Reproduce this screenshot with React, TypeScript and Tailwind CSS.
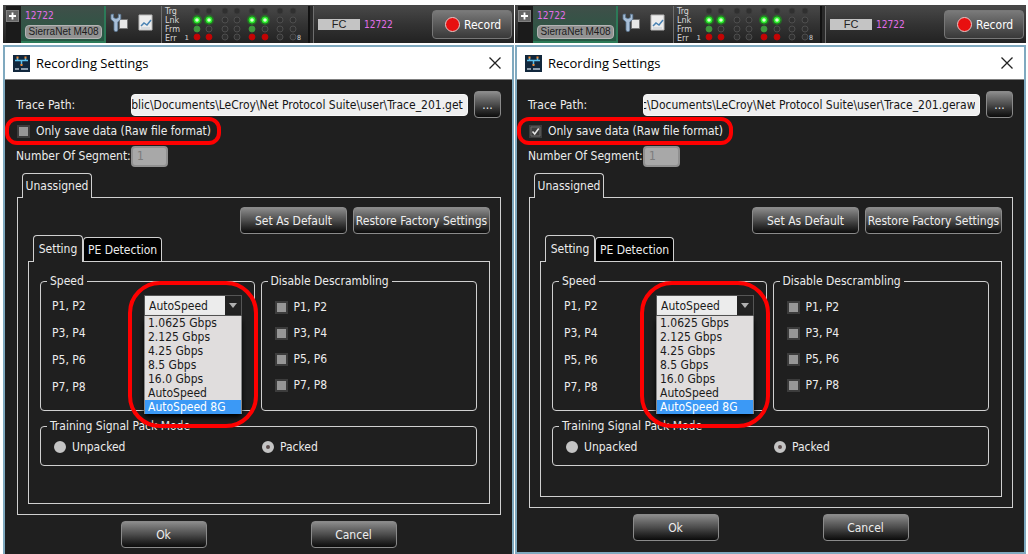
import React, { useEffect, useRef } from "react";

const speeds = [
  "1.0625 Gbps",
  "2.125 Gbps",
  "4.25 Gbps",
  "8.5 Gbps",
  "16.0 Gbps",
  "AutoSpeed",
  "AutoSpeed 8G",
];

const ports = ["P1, P2", "P3, P4", "P5, P6", "P7, P8"];

const ledColumns = [8, 20, 36, 48, 63, 76, 91, 104];
const ledRows = [
  { y: 5, colors: ["", "", "", "", "", "", "", ""] },
  { y: 14, colors: ["#2bf02b", "#2bf02b", "", "", "#2bf02b", "#2bf02b", "", ""] },
  { y: 23, colors: ["#3f9a3f", "", "", "", "#3f9a3f", "", "", ""] },
  { y: 31, colors: ["#c40404", "#c40404", "", "", "#c40404", "#c40404", "", ""] },
];

const buttonClass =
  "h-[27px] rounded border border-[#8a8a8a] bg-linear-to-b from-[#8c8c8c] via-[#4c4c4c] to-[#0c0c0c] text-[#eeeeee] whitespace-nowrap";

function Leds() {
  return (
    <svg width="112" height="38" viewBox="0 0 112 38" className="shrink-0">
      {ledRows.map((row) =>
        row.colors.map((color, i) => (
          <g key={`${row.y}-${i}`}>
            {color === "#2bf02b" && (
              <circle cx={ledColumns[i]} cy={row.y} r="5" fill="#16a016" opacity="0.55" />
            )}
            <circle
              cx={ledColumns[i]}
              cy={row.y}
              r="3"
              fill={color || "#303030"}
              stroke={color || (row.y === 5 ? "#3c3c3c" : "#565656")}
              strokeWidth="0.8"
            />
            {color === "#2bf02b" && <circle cx={ledColumns[i]} cy={row.y} r="1.8" fill="#d8ffd0" />}
          </g>
        ))
      )}
    </svg>
  );
}

function Toolbar() {
  return (
    <div className="flex h-[38px] bg-linear-to-b from-[#484848] via-[#333333] to-[#222222] border-t border-[#444444] pl-[3px] text-[10px] leading-3">
      <div className="w-[15px] shrink-0 bg-[#1b1b1b] pt-1">
        <button aria-label="Expand" className="block w-[13px] h-3 bg-[#666666] border border-[#808080]">
          <svg width="11" height="10" viewBox="0 0 11 10">
            <path d="M5.5 1.5v7M2 5h7" stroke="#ffffff" strokeWidth="1.8" />
          </svg>
        </button>
      </div>
      <div className="w-[85px] shrink-0 border-r-2 border-b-2 border-[#2c7a58] bg-linear-to-b from-[#3f4f49] to-[#245843] pl-1 pt-1">
        <div className="text-[#e26ee8]">12722</div>
        <div className="mt-[3px] w-[77px] h-[14px] rounded-sm border border-[#b4b4b4] bg-[#929292] text-center text-[#1c1c1c] font-['Liberation_Sans',sans-serif] leading-[12px] whitespace-nowrap">
          SierraNet M408
        </div>
      </div>
      <svg width="20" height="24" viewBox="0 0 20 24" className="shrink-0 ml-1 mt-1">
        <path d="M9.5 9.5h8v9h-8z" fill="#e8e8e8" stroke="#777777" />
        <path
          d="M1 4.5v4.8l3 2.6v7.8a1.9 1.9 0 0 0 3.8 0v-7.8l3-2.6V4.5L8.4 4v3.6L6 8.8 3.4 7.6V4z"
          fill="#a9bfd8"
          stroke="#5c7896"
          strokeWidth="0.8"
        />
      </svg>
      <svg width="16" height="18" viewBox="0 0 16 18" className="shrink-0 ml-2 mt-2">
        <path d="M1 1h13v15H1z" fill="#ececec" stroke="#b8b8b8" />
        <path d="M3 12l3-3 3 2 4-5" fill="none" stroke="#4a83b4" strokeWidth="1.5" />
        <path d="M3 14h9" stroke="#c0c8d0" />
      </svg>
      <div className="shrink-0 ml-[7px] w-px bg-[#6e6e6e]" />
      <div className="shrink-0 w-[27px] pl-[3px] pt-px text-[8px] leading-[9px] text-[#d8d8d8] font-['DejaVu_Sans',sans-serif]">
        <div>Trg</div>
        <div>Lnk</div>
        <div>Frm</div>
        <div className="flex justify-between">
          Err<span className="text-[7px]">1</span>
        </div>
      </div>
      <Leds />
      <div className="shrink-0 w-[7px] pt-[28px] -ml-1 text-[7px] leading-[9px] text-[#d8d8d8]">8</div>
      <div className="shrink-0 ml-1 w-[6px] border-l-2 border-r border-l-[#111111] border-r-[#6e6e6e] bg-[#2a2a2a]" />
      <div className="flex flex-1 items-center ml-1">
        <div className="w-[42px] h-[11px] bg-[#c4c4c4] text-center text-[#222222] font-['Liberation_Sans',sans-serif] text-[11px] leading-[11px]">
          FC
        </div>
        <div className="ml-1 text-[#e26ee8]">12722</div>
      </div>
      <button className="shrink-0 mt-1 mr-0.5 flex h-[29px] w-20 items-center gap-1 rounded border border-[#777777] bg-linear-to-b from-[#7a7a7a] to-[#393939] pl-3 text-[12px] text-white">
        <span className="size-[15px] rounded-full border border-[#e8c8c8] bg-[#e81010]" />
        Record
      </button>
    </div>
  );
}

function TitleBar() {
  return (
    <div className="flex h-[33px] items-center border-b border-[#808080] bg-white pl-2 pr-[10px]">
      <svg width="17" height="17" viewBox="0 0 17 17">
        <path d="M0 0h17v17H0z" fill="#11273c" />
        <path d="M2 5.5h13M4.5 5v-2M12.5 5v-2M8.5 5v5" stroke="#5cc0ec" strokeWidth="1.5" />
        <path d="M3.5 2.5h2M11.5 2.5h2M7.5 10h2" stroke="#f08a35" strokeWidth="2" />
        <path d="M2 14h4M8 14h7" stroke="#b8c8d4" strokeWidth="1.4" />
      </svg>
      <h2 className="ml-[6px] flex-1 text-[13px] text-black font-['Open_Sans',sans-serif]">Recording Settings</h2>
      <button aria-label="Close">
        <svg width="14" height="14" viewBox="0 0 14 14">
          <path d="M1.5 1.5l11 11M12.5 1.5l-11 11" stroke="#222222" strokeWidth="1.3" />
        </svg>
      </button>
    </div>
  );
}

function CheckBox({ label, checked = false }: { label: string; checked?: boolean }) {
  return (
    <label className="flex items-center gap-[6px]">
      <span className="relative flex">
        <input
          type="checkbox"
          defaultChecked={checked}
          className="peer size-[13px] appearance-none border-2 border-[#3c3c3c] bg-[#969696] checked:bg-[#3c3c3c]"
        />
        <svg
          width="13"
          height="13"
          viewBox="0 0 13 13"
          className="pointer-events-none absolute inset-0 hidden peer-checked:block"
        >
          <path d="M2 2h9v9H2z" fill="none" stroke="#686868" />
          <path d="M3.5 6.5l2.2 2.5 4-5.5" fill="none" stroke="#e4e4e4" strokeWidth="1.6" />
        </svg>
      </span>
      {label}
    </label>
  );
}

function Radio({ label, name, checked = false }: { label: string; name: string; checked?: boolean }) {
  return (
    <label className="flex items-center gap-[6px]">
      <input
        type="radio"
        name={name}
        defaultChecked={checked}
        className="size-3 appearance-none rounded-full border-4 border-[#c4c4c4] bg-[#c4c4c4] checked:bg-[#5c4c4c]"
      />
      {label}
    </label>
  );
}

function SpeedSelect({ id }: { id: string }) {
  return (
    <div className="relative w-[98px]">
      <select
        id={id}
        defaultValue="AutoSpeed"
        className="block h-[21px] w-full appearance-none border border-[#555555] bg-[#ececec] pl-1 text-[12px] text-[#1a1a1a]"
      >
        {speeds.map((speed) => (
          <option key={speed}>{speed}</option>
        ))}
      </select>
      <span className="pointer-events-none absolute right-px top-px flex h-[19px] w-4 justify-center bg-[#222222] pt-[7px]">
        <svg width="8" height="5" viewBox="0 0 8 5">
          <path d="M0 0h8L4 5z" fill="#b0b0b0" />
        </svg>
      </span>
      <ul
        role="listbox"
        className="absolute left-0 top-full z-10 w-full border-x border-[#888888] bg-[#e0dddd] text-[#1a1a1a] shadow-md shadow-black"
      >
        {speeds.map((speed) => (
          <li
            key={speed}
            role="option"
            aria-selected={speed === "AutoSpeed 8G"}
            className="h-[14px] pl-[3px] leading-[14px] whitespace-nowrap aria-selected:bg-[#3b99f6] aria-selected:text-white"
          >
            {speed}
          </li>
        ))}
      </ul>
      <div className="pointer-events-none absolute -left-4 -top-[14px] z-20 h-[147px] w-[130px] rounded-[32px] border-4 border-[#fe0000]" />
    </div>
  );
}

type PanelProps = {
  id: string;
  path: string;
  rawOnly: boolean;
  compact?: boolean;
};

function RecordingPanel({ id, path, rawOnly, compact = false }: PanelProps) {
  const pathRef = useRef<HTMLInputElement>(null);

  // keep the file name at the end of the path in view
  useEffect(() => {
    if (pathRef.current) pathRef.current.scrollLeft = pathRef.current.scrollWidth;
  }, []);

  return (
    <section className="flex min-w-0 flex-1 flex-col">
      <Toolbar />
      <div
        className={`mt-0.5 flex-1 border-x-2 border-t-2 border-[#7fa9bf] bg-[#1f1f1f] ${compact ? "border-b-2" : ""}`}
      >
        <TitleBar />
        <div className="pl-[11px] pr-[11px] pt-[11px]">
          <div className="flex items-center">
            <label htmlFor={`${id}-path`} className="w-[115px] shrink-0">
              Trace Path:
            </label>
            <input
              id={`${id}-path`}
              ref={pathRef}
              defaultValue={path}
              className="h-[22px] min-w-0 flex-1 rounded border border-[#f8f8f8] bg-[#efefef] pr-1 text-right text-[#141414]"
            />
            <button className={`${buttonClass} ml-[6px] w-[27px]`}>...</button>
          </div>

          <div className="relative mt-[3px] flex h-5 items-center pl-px">
            <CheckBox label="Only save data (Raw file format)" checked={rawOnly} />
            <div className="pointer-events-none absolute -left-[11px] -top-1 h-7 w-[216px] rounded-xl border-4 border-[#fe0000]" />
          </div>

          <div className="mt-1 flex h-[22px] items-center">
            <label htmlFor={`${id}-segments`} className="w-[115px]">
              Number Of Segment:
            </label>
            <input
              id={`${id}-segments`}
              defaultValue="1"
              disabled
              className="h-[21px] w-[37px] rounded border-2 border-[#909090] bg-[#a8a8a8] pl-1 text-[#7c7c7c]"
            />
          </div>

          <div className="mt-[6px] flex pl-[6px]">
            <button className="relative -mb-px h-[25px] w-[70px] rounded-t border border-b-0 border-[#d0d0d0] bg-[#1f1f1f]">
              Unassigned
            </button>
          </div>

          <div className="ml-px border border-[#d0d0d0] px-[10px] pb-[10px] pt-[9px]">
            <div className="flex justify-end gap-[6px]">
              <button className={`${buttonClass} w-[107px]`}>Set As Default</button>
              <button className={`${buttonClass} w-[137px]`}>Restore Factory Settings</button>
            </div>

            <div className="mt-px flex items-end pl-[5px]">
              <button className="relative -mb-px h-[27px] w-[50px] rounded-t border border-b-0 border-[#d0d0d0] bg-[#1f1f1f]">
                Setting
              </button>
              <button className="h-6 w-[79px] rounded-t border border-b-0 border-[#d0d0d0] bg-black whitespace-nowrap">
                PE Detection
              </button>
            </div>

            <div className={`border border-[#d0d0d0] pl-[11px] pr-3 pt-3 ${compact ? "pb-[30px]" : "pb-[37px]"}`}>
              <div className="flex gap-[6px]">
                <fieldset className="h-[137px] flex-1 rounded border border-[#d0d0d0] pl-[11px] pt-1">
                  <legend className="-ml-[5px] px-[3px] leading-[14px]">Speed</legend>
                  {ports.map((port, i) => (
                    <div key={port} className="flex h-[27px] items-center">
                      <label htmlFor={i === 0 ? `${id}-speed` : undefined} className="w-[92px]">
                        {port}
                      </label>
                      {i === 0 && <SpeedSelect id={`${id}-speed`} />}
                    </div>
                  ))}
                </fieldset>
                <fieldset className="h-[137px] flex-1 rounded border border-[#d0d0d0] pl-[13px] pt-[6px]">
                  <legend className="-ml-[7px] px-[3px] leading-[14px]">Disable Descrambling</legend>
                  {ports.map((port) => (
                    <div key={port} className="flex h-[26px] items-center">
                      <CheckBox label={port} />
                    </div>
                  ))}
                </fieldset>
              </div>

              <fieldset className="mt-2 h-[47px] rounded border border-[#d0d0d0] pl-[13px] pt-1">
                <legend className="-ml-[7px] px-[3px] leading-[14px]">Training Signal Pack Mode</legend>
                <div className="flex h-5 items-center">
                  <div className="w-[208px]">
                    <Radio label="Unpacked" name={`${id}-pack`} />
                  </div>
                  <Radio label="Packed" name={`${id}-pack`} checked />
                </div>
              </fieldset>
            </div>
          </div>

          <div className="mt-[6px] flex justify-center gap-[104px] pb-[6px]">
            <button className={`${buttonClass} w-[86px]`}>Ok</button>
            <button className={`${buttonClass} w-[86px]`}>Cancel</button>
          </div>
        </div>
      </div>
    </section>
  );
}

export default function App() {
  return (
    <main className="flex min-h-screen gap-px bg-white pl-[3px] pr-0.5 pt-[5px] text-[12px] leading-4 text-[#ececec] font-['DejaVu_Sans_Condensed','DejaVu_Sans',sans-serif]">
      <RecordingPanel
        id="get"
        path="Public\Documents\LeCroy\Net Protocol Suite\user\Trace_201.get"
        rawOnly={false}
      />
      <RecordingPanel
        id="geraw"
        path="lic\Documents\LeCroy\Net Protocol Suite\user\Trace_201.geraw"
        rawOnly
        compact
      />
    </main>
  );
}
